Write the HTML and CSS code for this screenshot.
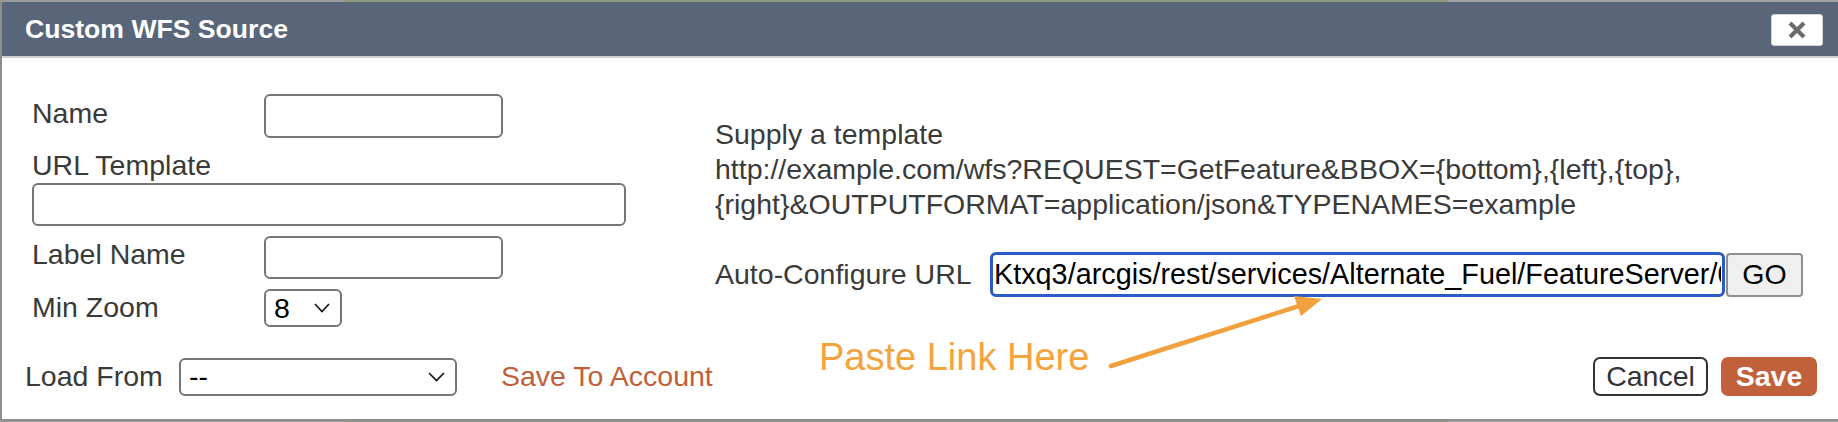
FILE: index.html
```html
<!DOCTYPE html>
<html lang="en">
<head>
<meta charset="utf-8">
<title>Custom WFS Source</title>
<link rel="stylesheet" href="styles.css">
</head>
<body>
<div class="dialog">
  <div class="titlebar">
    <span class="title">Custom WFS Source</span>
    <button class="close" type="button" aria-label="Close">
      <svg width="20" height="20" viewBox="0 0 20 20"><path d="M3 3 L17 17 M17 3 L3 17" stroke="#6b6b6b" stroke-width="4.2" fill="none"/></svg>
    </button>
  </div>
  <div class="content">
    <div class="main">
      <div class="left">
        <div class="row row-name"><label class="lbl">Name</label><input class="field short" type="text"></div>
        <div class="lbl-block">URL Template</div>
        <input class="field wide" type="text">
        <div class="row row-label"><label class="lbl">Label Name</label><input class="field short" type="text"></div>
        <div class="row row-zoom"><label class="lbl">Min Zoom</label>
          <div class="select zoom-select"><span class="sel-text">8</span>
            <svg class="chev" width="16" height="10" viewBox="0 0 16 10"><polyline points="1,1 8,8.5 15,1" fill="none" stroke="#111" stroke-width="1.6"/></svg>
          </div>
        </div>
      </div>
      <div class="right">
        <p class="help">Supply a template<br>http://example.com/wfs?REQUEST=GetFeature&amp;BBOX={bottom},{left},{top},<br>{right}&amp;OUTPUTFORMAT=application/json&amp;TYPENAMES=example</p>
        <div class="auto-row">
          <span class="auto-label">Auto-Configure URL</span>
          <input class="url" type="text" value="Ktxq3/arcgis/rest/services/Alternate_Fuel/FeatureServer/0">
          <button class="go" type="button">GO</button>
        </div>
      </div>
    </div>
    <div class="footer">
      <span class="load-label">Load From</span>
      <div class="select load-select"><span class="sel-text">--</span>
        <svg class="chev" width="17" height="10" viewBox="0 0 17 10"><polyline points="1,1 8.5,8.5 16,1" fill="none" stroke="#111" stroke-width="1.6"/></svg>
      </div>
      <a class="save-account" href="#">Save To Account</a>
      <div class="actions">
        <button class="cancel" type="button">Cancel</button>
        <button class="save" type="button">Save</button>
      </div>
    </div>
  </div>
  <div class="annot">Paste Link Here</div>
  <svg class="arrow" width="1838" height="420" viewBox="0 0 1838 420">
    <line x1="1111" y1="364" x2="1299" y2="304" stroke="#f0a13d" stroke-width="4.5" stroke-linecap="round"/>
    <polygon points="1322,297 1301,314 1294,294" fill="#f0a13d"/>
  </svg>
</div>
</body>
</html>
```
FILE: styles.css
```css
* { box-sizing: border-box; }

html, body {
  margin: 0;
  padding: 0;
}

body {
  width: 1838px;
  height: 422px;
  overflow: hidden;
  background: linear-gradient(90deg, #9b9b9b 0 345px, #8e9a80 345px 1448px, #a2a2a2 1448px);
  font-family: "Liberation Sans", Arial, Helvetica, sans-serif;
  color: #3a3a3a;
}

.dialog {
  position: relative;
  margin-top: 2px;
  width: 1838px;
  height: 419px;
  background: #fff;
  border-left: 2px solid #8e8e8e;
  border-bottom: 2px solid #8e8e8e;
  display: flex;
  flex-direction: column;
}

.titlebar {
  height: 56px;
  flex: none;
  background: #596579;
  border-bottom: 2px solid #cdd0cd;
  display: flex;
  align-items: center;
  padding-left: 23px;
  padding-right: 15px;
}

.title {
  color: #fff;
  font-weight: bold;
  font-size: 26.6px;
  margin-top: 1px;
}

.close {
  margin-left: auto;
  width: 52px;
  height: 32px;
  margin-top: 2px;
  background: #fff;
  border: 1px solid #d4d4d4;
  border-radius: 3px;
  padding: 0;
  display: flex;
  align-items: center;
  justify-content: center;
}

.content {
  flex: 1;
  padding: 0 21px 0 23px;
  display: flex;
  flex-direction: column;
  font-size: 28.5px;
}

.main {
  display: flex;
}

.left {
  width: 594px;
  margin-left: 7px;
  padding-top: 36px;
  display: flex;
  flex-direction: column;
}

.row {
  display: flex;
  align-items: center;
}

.row-name { height: 44px; }
.row-label { height: 43px; margin-top: 10px; }
.row-zoom { height: 38px; margin-top: 10px; }

.lbl {
  width: 232px;
  flex: none;
  line-height: 32px;
  padding-bottom: 7px;
}

.row-zoom .lbl { padding-bottom: 3px; }

.lbl-block {
  margin-top: 11px;
  line-height: 32px;
}

.field {
  border: 2px solid #767676;
  border-radius: 6px;
  background: #fff;
  font: inherit;
  padding: 0 6px;
  margin: 0;
}

.short {
  width: 239px;
  height: 100%;
}

.wide {
  margin-top: 2px;
  width: 594px;
  height: 43px;
}

.select {
  display: flex;
  align-items: center;
  justify-content: space-between;
  border: 2px solid #767676;
  border-radius: 6px;
  background: #fff;
  color: #000;
  height: 100%;
  padding: 0 10px 0 8px;
}

.zoom-select { width: 78px; }

.chev { display: block; flex: none; }

.right {
  flex: 1;
  margin-left: 89px;
  padding-top: 59px;
}

.help {
  margin: 0;
  line-height: 35px;
  white-space: nowrap;
}

.auto-row {
  margin-top: 30px;
  display: flex;
  align-items: center;
  height: 45px;
}

.auto-label {
  width: 275px;
  flex: none;
}

.url {
  width: 735px;
  height: 45px;
  border: 3px solid #2a5bc6;
  border-radius: 6px;
  font-family: inherit;
  font-size: 28.8px;
  color: #000;
  padding: 0 1px 0 1px;
  margin: 0;
  outline: none;
}

.go {
  margin-left: 1px;
  width: 77px;
  height: 44px;
  background: #efefef;
  border: 2px solid #8f8f8f;
  border-radius: 4px;
  font: inherit;
  color: #000;
  padding: 0;
}

.footer {
  margin-top: 30px;
  height: 39px;
  display: flex;
  align-items: center;
}

.load-label {
  width: 154px;
  flex: none;
}

.load-select {
  width: 278px;
  height: 38px;
  padding-right: 10px;
}

.save-account {
  margin-left: 44px;
  color: #bf603b;
  text-decoration: none;
}

.actions {
  margin-left: auto;
  display: flex;
  gap: 13px;
  height: 39px;
}

.cancel {
  width: 115px;
  height: 39px;
  background: #fff;
  border: 2px solid #333;
  border-radius: 7px;
  font: inherit;
  color: #333;
  padding: 0;
}

.save {
  width: 96px;
  height: 39px;
  background: #c0613c;
  border: none;
  border-radius: 7px;
  font: inherit;
  font-weight: bold;
  color: #fff;
  padding: 0;
}

.annot {
  position: absolute;
  left: 817px;
  top: 333px;
  font-size: 38px;
  line-height: 44px;
  color: #f4a43c;
  white-space: nowrap;
}

.arrow {
  position: absolute;
  left: -2px;
  top: 0;
  pointer-events: none;
}
```
